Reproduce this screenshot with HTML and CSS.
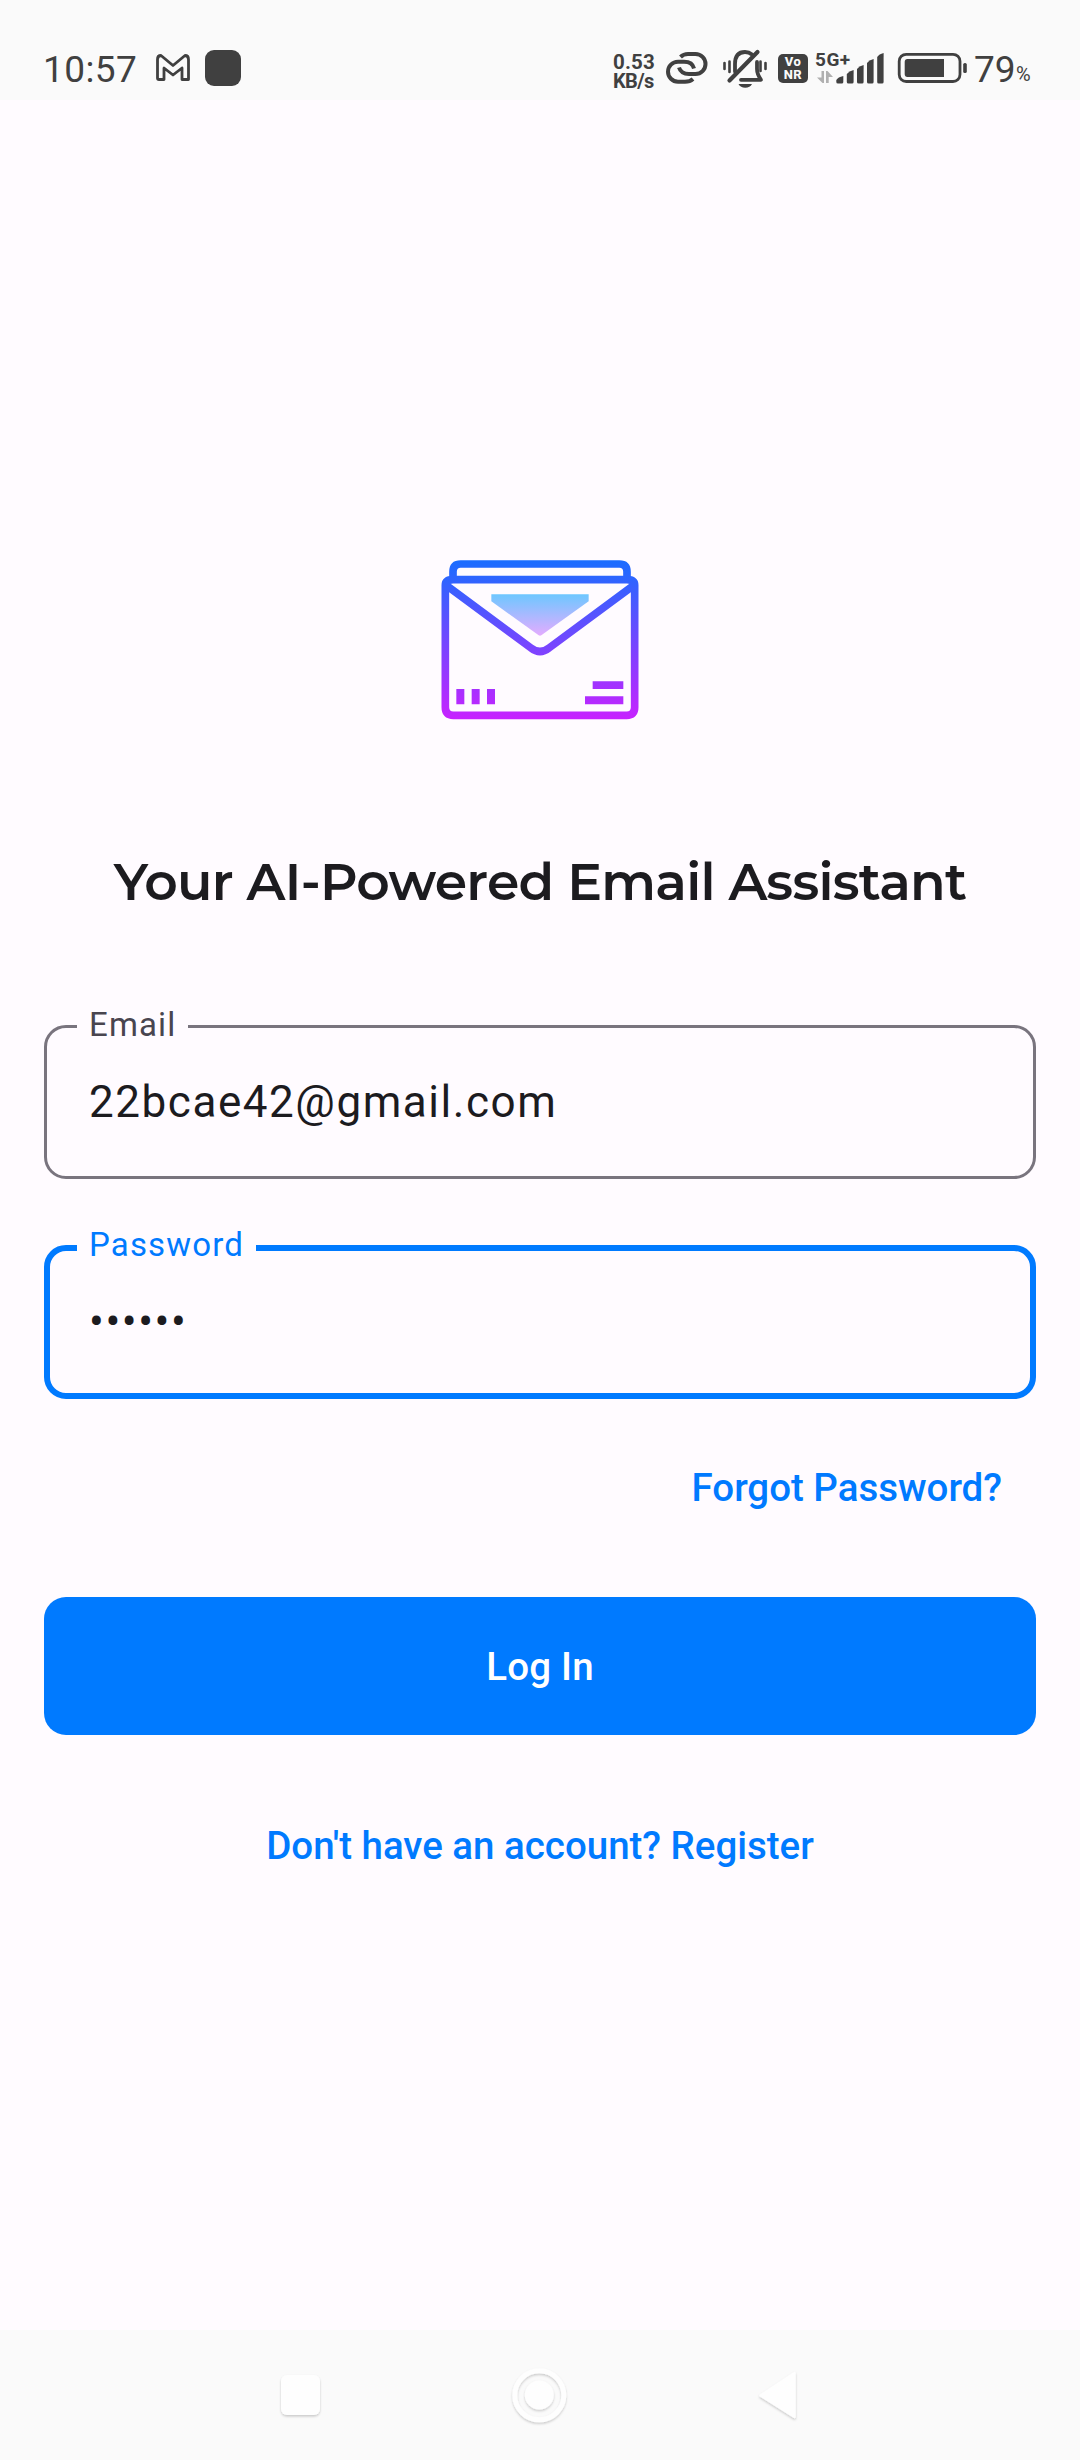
FILE: index.html
```html
<!DOCTYPE html>
<html lang="en">
<head>
<meta charset="utf-8">
<title>Log In</title>
<link rel="stylesheet" href="styles.css">
</head>
<body>
<div class="screen">
  <header class="status">
    <span class="clock">10:57</span>
    <svg class="icon mail" viewBox="156 0 34 100" width="34" height="100"><path d="M157.500 59.500Q157.500 55.500 161 55.500L173 65.500L185 55.500Q188.500 55.500 188.500 59.500V79.500H182V68L173 75L164 68V79.500H159Q157.500 79.500 157.500 78Z" fill="none" stroke="#404040" stroke-width="2.800" stroke-linejoin="round"/></svg>
    <span class="app-dot"></span>
    <span class="spacer"></span>
    <span class="speed"><span>0.53</span><span class="unit">KB/s</span></span>
    <svg class="icon link" viewBox="665 0 43 100" width="43" height="100"><g fill="none" stroke="#404040" stroke-width="4"><path d="M680.500 57Q683.500 54 688 54H695.500A10 10 0 0 1 695.500 74H689Q681 74 679 67.500"/><path d="M693 79Q690 81.700 685 81.700H678A10 10 0 0 1 678 61.700H684Q692.500 61.700 694 68.500"/></g></svg>
    <svg class="icon bell" viewBox="722 0 46 100" width="46" height="100"><g fill="none" stroke="#404040" stroke-linecap="round" stroke-linejoin="round"><path d="M735 71.500V64Q735 52 745 52Q749 52 752 54.500M757 62V69Q757 74 761 79.800H741" stroke-width="3.800"/><path d="M757.500 52L729.500 80.500" stroke-width="4.200"/><path d="M724.500 63V69M729.500 61.500V72M760.500 61.500V71M765.500 63V69" stroke-width="2.600"/></g><path d="M738.500 84H752Q750 87.800 745.200 87.800Q740.500 87.800 738.500 84Z" fill="#404040"/></svg>
    <span class="vonr"><span>Vo</span><span>NR</span></span>
    <span class="network">
      <span>5G+</span>
      <svg viewBox="817 70 16 14" width="16" height="14"><path d="M821.500 71H824V83H822.500L817 77.500H821.500ZM826 71H827.500L833 77H828.700V83H826Z" fill="#b0b0b0"/></svg>
    </span>
    <svg class="icon bars" viewBox="836 0 49 100" width="49" height="100"><g fill="#404040"><path d="M836.300 80Q838 77 843.300 76V82Q843.300 83.600 841.700 83.600H838Q836.300 83.600 836.300 82Z"/><path d="M846.800 74Q849 71 853.600 70V82Q853.600 83.600 852 83.600H848.500Q846.800 83.600 846.800 82Z"/><path d="M857 69Q859 66 863.600 65V82Q863.600 83.600 862 83.600H858.700Q857 83.600 857 82Z"/><path d="M867 63Q869 60 873.600 59V82Q873.600 83.600 872 83.600H868.700Q867 83.600 867 82Z"/><path d="M877.200 57Q879 54 883.600 53V82Q883.600 83.600 882 83.600H878.800Q877.200 83.600 877.200 82Z"/></g></svg>
    <svg class="icon battery" viewBox="897 0 70 100" width="70" height="100"><rect x="899.200" y="54.300" width="60.800" height="27.200" rx="7" fill="none" stroke="#404040" stroke-width="2.800"/><path d="M907.500 59H944V77H907.500Q904.700 77 904.700 74V62Q904.700 59 907.500 59Z" fill="#404040"/><rect x="963.200" y="63" width="3.600" height="10" rx="1.600" fill="#404040"/></svg>
    <span class="charge">79</span><span class="percent">%</span>
  </header>

  <main class="login">
    <svg class="logo" viewBox="0 0 720 600" width="240" height="200">
      <defs>
        <linearGradient id="line" gradientUnits="userSpaceOnUse" x1="0" y1="60" x2="0" y2="540"><stop offset="0" stop-color="#1a6dff"/><stop offset="1" stop-color="#c822ff"/></linearGradient>
        <linearGradient id="flap" gradientUnits="userSpaceOnUse" x1="0" y1="162" x2="0" y2="290"><stop offset="0" stop-color="#6dc7ff"/><stop offset="1" stop-color="#e6abff"/></linearGradient>
      </defs>
      <g fill="none" stroke="url(#line)" stroke-width="23" stroke-linejoin="round">
        <path d="M99 119H621Q644 119 644 136V502Q644 526 620 526H100Q76 526 76 502V136Q76 119 99 119Z"/>
        <path d="M99 119V95Q99 72 122 72H598Q621 72 621 95V119"/>
        <path d="M80 137L333 324Q360 345 387 324L640 137"/>
      </g>
      <path d="M214 163H506V184L364 286Q360 288 356 286L214 184Z" fill="url(#flap)"/>
      <path d="M109 447H133V493H109ZM155 447H179V493H155ZM201 447H225V493H201ZM518 424H610V447H518ZM495 469H610V493H495Z" fill="url(#line)"/>
    </svg>
    <h1 class="title">Your AI-Powered Email Assistant</h1>
    <fieldset class="field email">
      <legend>Email</legend>
      <div class="value">22bcae42@gmail.com</div>
    </fieldset>
    <fieldset class="field password">
      <legend>Password</legend>
      <div class="value">••••••</div>
    </fieldset>
    <a class="link-text forgot">Forgot Password?</a>
    <button class="submit">Log In</button>
    <a class="link-text register">Don't have an account? Register</a>
  </main>

  <nav class="nav">
    <svg viewBox="270 2330 536 130" width="536" height="130">
      <defs><filter id="drop" x="-20%" y="-20%" width="140%" height="150%"><feDropShadow dx="0" dy="1.500" stdDeviation="1" flood-color="#000" flood-opacity=".2"/></filter></defs>
      <g fill="#fefefe" filter="url(#drop)">
        <rect x="281" y="2375" width="39" height="40" rx="6"/>
        <circle cx="539.300" cy="2395.300" r="24.500" fill="none" stroke="#fefefe" stroke-width="5"/>
        <circle cx="539.300" cy="2395" r="14.500"/>
        <path d="M794.500 2373V2417L760.500 2395.500Z" stroke="#fefefe" stroke-width="2.500" stroke-linejoin="round"/>
      </g>
    </svg>
  </nav>
</div>
</body>
</html>
```
FILE: styles.css
```css
* { box-sizing: border-box; }

body {
  margin: 0;
  background: #fffbff;
  color: #1c1b1f;
  font-family: Roboto, "Liberation Sans", sans-serif;
}

.screen {
  width: 1080px;
  height: 2460px;
  display: flex;
  flex-direction: column;
}

/* Status bar */
.status {
  height: 100px;
  flex: none;
  display: flex;
  align-items: flex-start;
  padding: 0 44px 0 43px;
  background: #fafafa;
  color: #404040;
  white-space: nowrap;
}

.icon { flex: none; }

.clock {
  width: 113px;
  margin-top: 48px;
  font-size: 37px;
  line-height: 44px;
  font-weight: 450;
  letter-spacing: 0.4px;
}

.app-dot {
  width: 36px;
  height: 36px;
  margin: 50px 0 0 15px;
  border-radius: 9px;
  background: #404040;
}

.spacer { flex: 1; }

.speed {
  display: flex;
  flex-direction: column;
  width: 52px;
  margin-top: 53px;
  font-size: 20.500px;
  line-height: 19px;
  font-weight: 700;
  letter-spacing: 0.2px;
}

.speed .unit {
  font-size: 20px;
  letter-spacing: -0.6px;
}

.bell { margin-left: 14px; }

.vonr {
  width: 30px;
  height: 29px;
  margin: 54px 0 0 10px;
  padding-top: 2px;
  border-radius: 5px;
  background: #404040;
  color: #fafafa;
  font: 800 13px/12.500px Roboto, sans-serif;
  letter-spacing: 0.5px;
  display: flex;
  flex-direction: column;
  align-items: center;
}

.network {
  width: 21px;
  margin: 48px 0 0 7px;
  display: flex;
  flex-direction: column;
  font-size: 19px;
  line-height: 23px;
  font-weight: 700;
  letter-spacing: 0.5px;
}

.network svg { margin: -1px 0 0 2px; }

.battery { margin-left: 12px; }

.charge {
  width: 42px;
  margin: 48px 0 0 7px;
  font-size: 37px;
  line-height: 44px;
  font-weight: 450;
}

.percent {
  width: 20px;
  margin-top: 61px;
  font-size: 20px;
  line-height: 26px;
}

/* Login form */
.login {
  flex: 1;
  display: flex;
  flex-direction: column;
  padding: 440px 44px 0;
}

.logo {
  flex: none;
  align-self: center;
}

.title {
  margin: 105px 0 0;
  height: 74px;
  font: 600 52px/74px Montserrat, Inter, sans-serif;
  letter-spacing: -0.720px;
  text-align: center;
  white-space: nowrap;
}

.field {
  min-width: 0;
  height: 154px;
  margin: 106px 0 0;
  padding: 0 30px;
  border: 3px solid #79747e;
  border-radius: 22px;
}

.field legend {
  height: 3px;
  padding: 0 12px;
  font-size: 33px;
  line-height: 0;
  letter-spacing: 1.15px;
  color: #49454f;
}

.value {
  padding: 48px 11px 0 12px;
  font-size: 44px;
  line-height: 52px;
  letter-spacing: 1.55px;
}

.field.password {
  margin-top: 66px;
  padding: 0 27px;
  border: 6px solid #007aff;
}

.password legend {
  height: 6px;
  color: #007aff;
}

.password .value { padding-top: 45px; }

.link-text {
  color: #007aff;
  font-size: 38.500px;
  line-height: 46px;
  font-weight: 500;
  letter-spacing: -0.02px;
}

.forgot {
  align-self: flex-end;
  margin: 66px 34px 0 0;
}

.submit {
  height: 138px;
  flex: none;
  margin: 86px 0 0;
  padding: 2px 0 0;
  border: 0;
  border-radius: 22px;
  background: #007aff;
  color: #fff;
  font: 500 38.500px/46px Roboto, sans-serif;
  letter-spacing: 0.2px;
}

.register {
  align-self: center;
  margin-top: 88px;
}

/* System navigation */
.nav {
  height: 130px;
  flex: none;
  padding-left: 270px;
  background: #fafafa;
}

.nav svg { display: block; }
```
